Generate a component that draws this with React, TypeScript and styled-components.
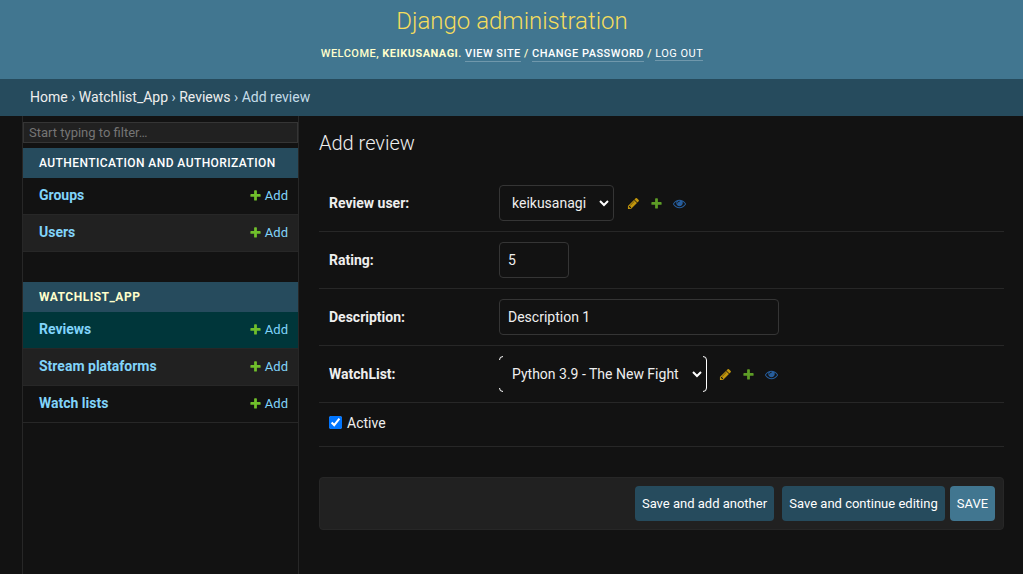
import React from "react";
import styled, { createGlobalStyle, css } from "styled-components";

const GlobalStyle = createGlobalStyle`
  * { box-sizing: border-box; }
  html, body, #root { height: 100%; }
  body {
    margin: 0;
    background: #121212;
    color: #eeeeee;
    font: 14px/20px Roboto, "Liberation Sans", sans-serif;
    overflow: hidden;
  }
`;

const Page = styled.div`
  display: flex;
  flex-direction: column;
  height: 574px;
`;

const Header = styled.header`
  display: flex;
  flex-direction: column;
  align-items: center;
  height: 79px;
  padding: 7px 0 0 1px;
  background: #417690;
  color: #ffffcc;
`;

const SiteName = styled.h1`
  margin: 0;
  font-size: 24px;
  line-height: 28px;
  font-weight: 300;
  color: #f5dd5d;
`;

const UserTools = styled.div`
  display: flex;
  align-items: flex-start;
  margin-top: 12px;
  font-size: 11px;
  line-height: 14px;
  font-weight: 500;
  letter-spacing: 0.48px;
  text-transform: uppercase;
  white-space: pre;
`;

const ToolLink = styled.a<{ $light?: boolean }>`
  height: ${(p) => (p.$light ? 14 : 15)}px;
  color: #ffffff;
  border-bottom: 1px solid rgba(255, 255, 255, 0.25);
  font-weight: ${(p) => (p.$light ? 400 : 500)};
`;

const Breadcrumbs = styled.nav`
  height: 37px;
  padding: 8px 30px;
  background: #264b5d;
  color: #c4dce8;
  white-space: pre;
`;

const Crumb = styled.a`
  color: #eeeeee;
`;

const Main = styled.div`
  display: flex;
  flex: 1;
  min-height: 0;
`;

const Sidebar = styled.nav`
  width: 277px;
  margin-left: 22px;
  padding-top: 6px;
  border: 1px solid #272727;
  border-width: 0 1px;
`;

const Filter = styled.input`
  display: block;
  width: 100%;
  height: 21px;
  margin-bottom: 5px;
  padding: 0 5px;
  border: 1px solid #353535;
  background: #212121;
  color: #eeeeee;
  font: 13px Roboto, "Liberation Sans", sans-serif;
  &::placeholder { color: #757575; }
`;

const Module = styled.section`
  margin-bottom: 30px;
`;

const Caption = styled.h2<{ $current?: boolean }>`
  margin: 0;
  height: 30px;
  padding-left: 16px;
  background: #264b5d;
  color: ${(p) => (p.$current ? "#ffffcc" : "#ffffff")};
  font-size: 12px;
  line-height: 30px;
  font-weight: ${(p) => (p.$current ? 700 : 500)};
  letter-spacing: ${(p) => (p.$current ? 0.5 : 0.43)}px;
  text-transform: uppercase;
`;

const ModelRow = styled.div<{ $tone?: "alt" | "current" }>`
  display: flex;
  justify-content: space-between;
  align-items: flex-start;
  height: 37px;
  padding: 7px 10px 0 16px;
  border-bottom: 1px solid #272727;
  background: ${(p) => (p.$tone === "current" ? "#00363a" : p.$tone === "alt" ? "#212121" : "#121212")};
  color: #81d4fa;
`;

const ModelName = styled.a`
  font-weight: 700;
`;

const AddLink = styled.a`
  display: flex;
  align-items: flex-start;
  gap: 3px;
  padding-top: 1px;
  font-size: 13px;
  svg { margin-top: 3px; }
`;

const Content = styled.main`
  flex: 1;
  padding: 17px 19px 0 20px;
`;

const Title = styled.h1`
  margin: 0 0 22px;
  font-size: 20px;
  line-height: 20px;
  font-weight: 300;
  color: #eeeeee;
`;

const FormRow = styled.div<{ $short?: boolean }>`
  display: flex;
  align-items: center;
  height: ${(p) => (p.$short ? 44 : 57)}px;
  padding: ${(p) => (p.$short ? "0 10px 4px" : "0 10px")};
  border-bottom: 1px solid #272727;
`;

const Label = styled.label`
  width: 170px;
  font-weight: 700;
`;

const control = css`
  height: 36px;
  margin: 0;
  padding: 6px 8px;
  border: 1px solid #353535;
  border-radius: 4px;
  background: #121212;
  color: #eeeeee;
  font: 14px Roboto, "Liberation Sans", sans-serif;
  outline: none;
`;

const TextInput = styled.input<{ $width: number }>`
  ${control}
  width: ${(p) => p.$width}px;
`;

const SelectFrame = styled.div<{ $focused?: boolean }>`
  position: relative;
  display: flex;
  align-items: center;
  color: #ffffff;
  > svg {
    position: absolute;
    right: 5px;
    top: 12px;
    pointer-events: none;
  }
  ${(p) =>
    p.$focused &&
    css`
      &::after {
        content: "";
        position: absolute;
        inset: 0;
        pointer-events: none;
        background:
          linear-gradient(#121212, #121212) 4px 0 / calc(100% - 8px) 1px no-repeat,
          linear-gradient(#121212, #121212) 4px 100% / calc(100% - 8px) 1px no-repeat,
          linear-gradient(#121212, #121212) 0 4px / 1px calc(100% - 8px) no-repeat;
      }
    `}
`;

const Select = styled.select<{ $width: number; $focused?: boolean }>`
  ${control}
  appearance: none;
  padding-left: 12px;
  width: ${(p) => p.$width}px;
  border-color: ${(p) => (p.$focused ? "#ffffff" : "#353535")};
`;

const RelatedLinks = styled.div<{ $gap: number }>`
  display: flex;
  gap: 10px;
  margin-left: ${(p) => p.$gap}px;
  padding-top: 1px;
  opacity: 0.8;
`;

const Checkbox = styled.input`
  width: 13px;
  height: 13px;
  margin: 0 5px 0 0;
`;

const SubmitRow = styled.div`
  display: flex;
  justify-content: flex-end;
  height: 53px;
  margin-top: 30px;
  padding: 8px;
  border: 1px solid #272727;
  border-radius: 4px;
  background: #212121;
`;

const Button = styled.button<{ $width: number; $primary?: boolean }>`
  width: ${(p) => p.$width}px;
  height: 35px;
  margin-left: ${(p) => (p.$primary ? 5 : 8)}px;
  padding: 0;
  border: 0;
  border-radius: 4px;
  background: ${(p) => (p.$primary ? "#417690" : "#264b5d")};
  color: #ffffff;
  font: 13px Roboto, "Liberation Sans", sans-serif;
  text-transform: ${(p) => (p.$primary ? "uppercase" : "none")};
  white-space: nowrap;
`;

const icons = {
  add: {
    fill: "#70bf2b",
    d: "M1600 796v192q0 40-28 68t-68 28h-416v416q0 40-28 68t-68 28H800q-40 0-68-28t-28-68v-416H288q-40 0-68-28t-28-68V796q0-40 28-68t68-28h416V284q0-40 28-68t68-28h192q40 0 68 28t28 68v416h416q40 0 68 28t28 68z",
  },
  change: {
    fill: "#efb80b",
    d: "M491 1536l91-91-235-235-91 91v107h128v128h107zm523-928q0-22-22-22-10 0-17 7l-542 542q-7 7-7 17 0 22 22 22 10 0 17-7l542-542q7-7 7-17zm-54-192l416 416-832 832H128v-416zm683 96q0 53-37 90l-166 166-416-416 166-165q36-38 90-38 53 0 91 38l235 234q37 39 37 91z",
  },
  view: {
    fill: "#2b70bf",
    d: "M1664 960q-152-236-381-353 61 104 61 225 0 185-131.5 316.5T896 1280t-316.5-131.5T448 832q0-121 61-225-229 117-381 353 133 205 333.5 326.5T896 1408t434.5-121.5T1664 960zM944 576q0-20-14-34t-34-14q-125 0-214.5 89.5T592 832q0 20 14 34t34 14 34-14 14-34q0-86 61-147t147-61q20 0 34-14t14-34zm848 384q0 34-20 69-140 230-376.5 368.5T896 1536t-499.5-139T20 1029Q0 994 0 960t20-69q140-229 376.5-368T896 384t499.5 139T1772 891q20 35 20 69z",
  },
};

const Icon = ({ name }: { name: keyof typeof icons }) => (
  <svg width="13" height="13" viewBox="0 0 1792 1792">
    <path fill={icons[name].fill} d={icons[name].d} />
  </svg>
);

const Related = ({ gap }: { gap: number }) => (
  <RelatedLinks $gap={gap}>
    <Icon name="change" />
    <Icon name="add" />
    <Icon name="view" />
  </RelatedLinks>
);

const SelectBox = ({ value, width, focused }: { value: string; width: number; focused?: boolean }) => (
  <SelectFrame $focused={focused}>
    <Select $width={width} $focused={focused}>
      <option>{value}</option>
    </Select>
    <svg width="10" height="12" viewBox="0 0 10 12">
      <path d="M1 4l4 4 4-4" fill="none" stroke="currentColor" strokeWidth="2" />
    </svg>
  </SelectFrame>
);

const Model = ({ name, tone }: { name: string; tone?: "alt" | "current" }) => (
  <ModelRow $tone={tone}>
    <ModelName>{name}</ModelName>
    <AddLink>
      <Icon name="add" />
      Add
    </AddLink>
  </ModelRow>
);

export default function App() {
  return (
    <Page>
      <GlobalStyle />
      <Header>
        <SiteName>Django administration</SiteName>
        <UserTools>
          <span>
            Welcome, <strong>keikusanagi</strong>.{" "}
          </span>
          <ToolLink>View site</ToolLink>
          <span> / </span>
          <ToolLink>Change password</ToolLink>
          <span> / </span>
          <ToolLink $light>Log out</ToolLink>
        </UserTools>
      </Header>
      <Breadcrumbs>
        <Crumb>Home</Crumb> › <Crumb>Watchlist_App</Crumb> › <Crumb>Reviews</Crumb> › Add review
      </Breadcrumbs>
      <Main>
        <Sidebar>
          <Filter placeholder="Start typing to filter…" />
          <Module>
            <Caption>Authentication and Authorization</Caption>
            <Model name="Groups" />
            <Model name="Users" tone="alt" />
          </Module>
          <Module>
            <Caption $current>Watchlist_App</Caption>
            <Model name="Reviews" tone="current" />
            <Model name="Stream plataforms" tone="alt" />
            <Model name="Watch lists" />
          </Module>
        </Sidebar>
        <Content>
          <Title>Add review</Title>
          <FormRow>
            <Label>Review user:</Label>
            <SelectBox value="keikusanagi" width={115} />
            <Related gap={13} />
          </FormRow>
          <FormRow>
            <Label>Rating:</Label>
            <TextInput $width={70} defaultValue="5" />
          </FormRow>
          <FormRow>
            <Label>Description:</Label>
            <TextInput $width={280} defaultValue="Description 1" />
          </FormRow>
          <FormRow>
            <Label>WatchList:</Label>
            <SelectBox value="Python 3.9 - The New Fight" width={208} focused />
            <Related gap={12} />
          </FormRow>
          <FormRow $short>
            <Checkbox type="checkbox" defaultChecked />
            Active
          </FormRow>
          <SubmitRow>
            <Button $width={139}>Save and add another</Button>
            <Button $width={163}>Save and continue editing</Button>
            <Button $width={45} $primary>Save</Button>
          </SubmitRow>
        </Content>
      </Main>
    </Page>
  );
}
